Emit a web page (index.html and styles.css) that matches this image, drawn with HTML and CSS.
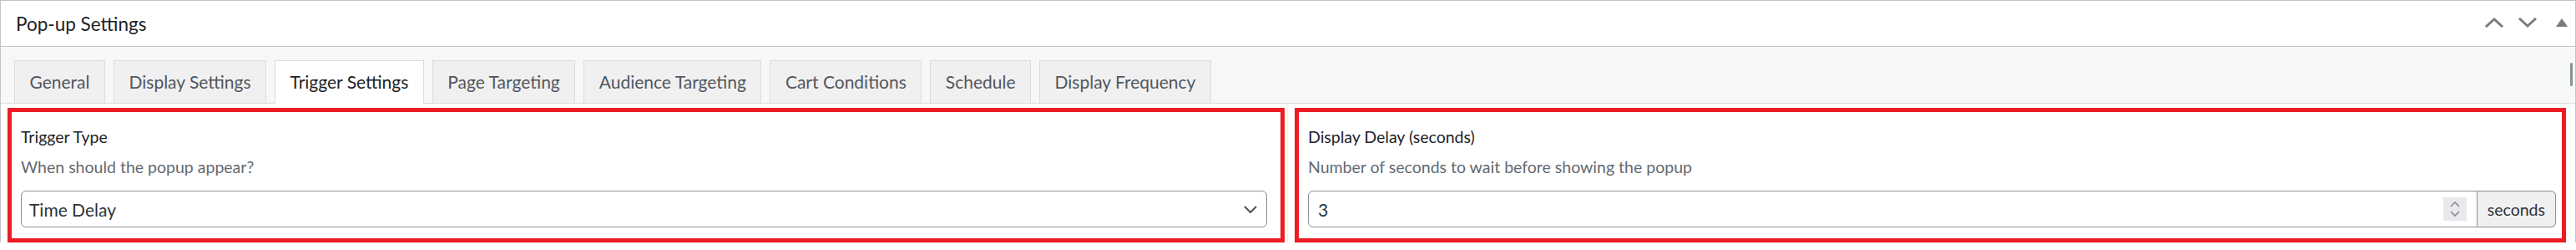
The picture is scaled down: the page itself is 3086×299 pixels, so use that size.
FILE: index.html
```html
<!DOCTYPE html>
<html lang="en">
<head>
    <meta charset="UTF-8">
    <meta name="viewport" content="width=device-width, initial-scale=1.0">
    <title>Pop-up Settings</title>
    <link rel="stylesheet" href="styles.css">
</head>
<body>
    <div class="postbox">
        <!-- Header -->
        <div class="postbox-header">
            <h2>Pop-up Settings</h2>
            <div class="handle-actions">
                <button class="handle-btn" aria-label="Move up">
                    <svg width="24" height="12" viewBox="0 0 24 12"><path d="M2 11 L12 2 L22 11" fill="none" stroke="#787c82" stroke-width="3"/></svg>
                </button>
                <button class="handle-btn" aria-label="Move down">
                    <svg width="24" height="12" viewBox="0 0 24 12"><path d="M2 1 L12 10 L22 1" fill="none" stroke="#787c82" stroke-width="3"/></svg>
                </button>
                <button class="handle-btn toggle" aria-label="Toggle panel">
                    <svg width="14" height="10" viewBox="0 0 14 10"><path d="M7 0 L14 10 L0 10 Z" fill="#787c82"/></svg>
                </button>
            </div>
        </div>

        <!-- Tabs -->
        <div class="tabs">
            <a class="tab">General</a>
            <a class="tab">Display Settings</a>
            <a class="tab active">Trigger Settings</a>
            <a class="tab">Page Targeting</a>
            <a class="tab">Audience Targeting</a>
            <a class="tab">Cart Conditions</a>
            <a class="tab">Schedule</a>
            <a class="tab">Display Frequency</a>
            <span class="scroll-thumb"></span>
        </div>

        <!-- Trigger settings panel -->
        <div class="panel">
            <div class="column">
                <div class="field field-left">
                    <label class="field-label">Trigger Type</label>
                    <p class="field-desc">When should the popup appear?</p>
                    <div class="select">
                        <span>Time Delay</span>
                        <svg width="16" height="9" viewBox="0 0 16 9"><path d="M1 1 L8 8 L15 1" fill="none" stroke="#50575e" stroke-width="2.2"/></svg>
                    </div>
                </div>
            </div>
            <div class="column">
                <div class="field field-right">
                    <label class="field-label">Display Delay (seconds)</label>
                    <p class="field-desc">Number of seconds to wait before showing the popup</p>
                    <div class="input-group">
                        <div class="number-input">
                            <span>3</span>
                            <span class="spinner">
                                <svg width="14" height="20" viewBox="0 0 14 20"><path d="M2 7 L7 2 L12 7 M2 13 L7 18 L12 13" fill="none" stroke="#8c8f94" stroke-width="1.6"/></svg>
                            </span>
                        </div>
                        <span class="addon">seconds</span>
                    </div>
                </div>
            </div>
        </div>
    </div>
</body>
</html>
```

FILE: styles.css
```css
body {
    margin: 0;
    padding: 0;
    font-family: Lato, "Noto Sans", sans-serif;
    background-color: #fff;
    color: #1d2327;
}

.postbox {
    border: 1px solid #c3c4c7;
    border-bottom: none;
    background-color: #fff;
}

/* Header */
.postbox-header {
    display: flex;
    align-items: center;
    justify-content: space-between;
    height: 54px;
    border-bottom: 1px solid #c3c4c7;
}

.postbox-header h2 {
    margin: 0 0 0 18px;
    font-size: 22.5px;
    font-weight: 400;
    color: #1d2327;
}

.handle-actions {
    display: flex;
    align-items: center;
    gap: 16px;
    padding-right: 9px;
    margin-top: -2px;
}

.handle-btn {
    display: flex;
    align-items: center;
    padding: 0;
    border: none;
    background: none;
    cursor: pointer;
}

.handle-btn.toggle {
    margin-left: 6px;
}

/* Tabs */
.tabs {
    display: flex;
    align-items: flex-end;
    gap: 10px;
    height: 67px;
    padding: 0 3px 0 16px;
    background-color: #f6f7f7;
    border-bottom: 1px solid #dcdcde;
}

.tab {
    display: block;
    height: 51px;
    line-height: 50px;
    padding: 0 17.5px;
    font-size: 21px;
    color: #50575e;
    background-color: #f0f0f1;
    border: 1px solid #dcdcde;
    border-bottom: none;
    box-sizing: border-box;
    cursor: pointer;
}

.tab.active {
    height: 52px;
    margin-bottom: -1px;
    background-color: #fff;
    color: #1d2327;
}

.scroll-thumb {
    align-self: flex-start;
    margin-top: 19px;
    margin-left: auto;
    width: 3px;
    height: 28px;
    border-radius: 2px;
    background-color: #8c8f94;
}

/* Panel */
.panel {
    display: grid;
    grid-template-columns: 1fr 1fr;
}

.column:first-child {
    border-right: 1px solid #f0f0f1;
}

.field {
    margin-top: 5px;
    border: 5px solid #ed1c24;
    padding-top: 16px;
    padding-bottom: 13px;
}

.field-left {
    margin-left: 8px;
    margin-right: 3px;
    padding-left: 11px;
    padding-right: 16px;
}

.field-right {
    margin-left: 8px;
    margin-right: 11px;
    padding-left: 11px;
    padding-right: 7px;
}

.field-label {
    display: block;
    font-size: 19.5px;
    line-height: 27px;
    color: #1d2327;
}

.field-desc {
    margin: 9px 0 15px;
    font-size: 19.5px;
    line-height: 27px;
    color: #646970;
}

.select {
    display: flex;
    align-items: center;
    justify-content: space-between;
    height: 44px;
    padding: 0 11px 0 9px;
    border: 1px solid #8c8f94;
    border-radius: 6px;
    box-sizing: border-box;
    font-size: 21px;
    color: #2c3338;
}

.input-group {
    display: flex;
    height: 44px;
}

.number-input {
    flex: 1;
    display: flex;
    align-items: center;
    justify-content: space-between;
    padding: 0 12px 0 11px;
    border: 1px solid #8c8f94;
    border-radius: 6px 0 0 6px;
    font-size: 21px;
    color: #2c3338;
}

.spinner {
    display: flex;
    align-items: center;
    justify-content: center;
    width: 28px;
    height: 28px;
    background-color: #e9e9ed;
}

.addon {
    display: flex;
    align-items: center;
    padding: 0 12px;
    font-size: 19.5px;
    color: #2c3338;
    background-color: #f0f0f1;
    border: 1px solid #8c8f94;
    border-left: none;
    border-radius: 0 6px 6px 0;
}
```
